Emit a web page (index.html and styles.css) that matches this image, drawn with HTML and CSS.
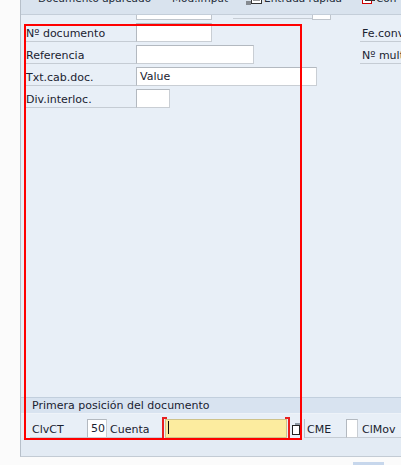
FILE: index.html
```html
<!DOCTYPE html>
<html>
<head>
<meta charset="utf-8">
<link rel="stylesheet" href="styles.css">
</head>
<body>
<div class="screen">
  <div class="gutter"></div>
  <div class="panel">
    <div class="toolbar">
      <span class="tb t1">Documento aparcado</span>
      <span class="tb t2">Mod.imput</span>
      <span class="tbicon i1"><svg width="17" height="14" viewBox="0 0 17 14"><rect x="5.5" y="0.5" width="10" height="12" fill="#fff" stroke="#333"/><path d="M7 3h7M7 6h7M7 9h7" stroke="#333"/><path d="M0 11h5M0 13h5" stroke="#333"/></svg></span>
      <span class="tb t3">Entrada rápida</span>
      <span class="tbicon i2"><svg width="14" height="14" viewBox="0 0 14 14"><rect x="0.5" y="3.5" width="9" height="9" fill="#fff" stroke="#c00"/><rect x="3.5" y="0.5" width="9" height="9" fill="none" stroke="#333"/></svg></span>
      <span class="tb t4">Con</span>
    </div>
    <div class="partial">
      <span class="pbox pb1"></span>
      <span class="pline"></span>
      <span class="pbox pb2"></span>
    </div>
    <div class="form">
      <div class="row">
        <span class="lbl">Nº documento</span>
        <span class="cell"><span class="inp w1"></span></span>
        <span class="rlbl">Fe.conversión</span>
      </div>
      <div class="row">
        <span class="lbl">Referencia</span>
        <span class="cell"><span class="inp w2"></span></span>
        <span class="rlbl">Nº multiplicador</span>
      </div>
      <div class="row">
        <span class="lbl">Txt.cab.doc.</span>
        <span class="cell"><span class="inp w3">Value</span></span>
      </div>
      <div class="row">
        <span class="lbl">Div.interloc.</span>
        <span class="cell"><span class="inp w4"></span></span>
      </div>
    </div>
    <div class="sechead">Primera posición del documento</div>
    <div class="itemrow">
      <span class="ilbl l1">ClvCT</span>
      <span class="inp small">50</span>
      <span class="ilbl l2">Cuenta</span>
      <span class="req"><span class="inp yellow"><span class="caret"></span></span></span>
      <span class="f4"><svg width="12" height="14" viewBox="0 0 12 14"><rect x="4" y="1" width="7" height="9" fill="#8c97a3"/><rect x="1.5" y="3.5" width="7" height="9" fill="#fff" stroke="#222"/></svg></span>
      <span class="ilbl l3">CME</span>
      <span class="inp chk"></span>
      <span class="ilbl l4">ClMov</span>
    </div>
    <div class="bottomband"></div>
  </div>
</div>
<div class="redframe"></div>
<div class="scrollnub"></div>
</body>
</html>
```
FILE: styles.css
```css
html, body {
  margin: 0;
  padding: 0;
}
body {
  width: 401px;
  height: 465px;
  overflow: hidden;
  background: #fbfbfb;
  font-family: "DejaVu Sans", Verdana, sans-serif;
  font-size: 11px;
  color: #1a2230;
  position: relative;
}
.screen {
  display: flex;
  width: 420px;
}
.gutter {
  width: 20px;
  flex: none;
}
.panel {
  width: 400px;
  flex: none;
  border-left: 1px solid #b7c0ca;
  border-bottom: 1px solid #c3cbd4;
  background: #e8eff7;
}
.toolbar {
  height: 14px;
  border-bottom: 1px solid #c4ced9;
  background: #d9e3ee;
  position: relative;
  overflow: hidden;
  display: flex;
  align-items: flex-end;
  font-size: 10.5px;
  color: #222b38;
}
.tb {
  display: block;
  flex: none;
  line-height: 14px;
  margin-bottom: 9px;
  white-space: nowrap;
  overflow: hidden;
}
.t1 { margin-left: 17px; width: 134px; }
.t2 { width: 74px; }
.tbicon {
  display: block;
  flex: none;
  margin-bottom: 9px;
  line-height: 0;
}
.i1 { width: 18px; }
.t3 { width: 98px; }
.i2 { width: 14px; }
.t4 { width: 30px; }

.partial {
  height: 5px;
  display: flex;
  align-items: flex-end;
  overflow: hidden;
  position: relative;
}
.pbox {
  display: block;
  height: 10px;
  background: #fff;
  border: 1px solid #bfc5cc;
  box-sizing: border-box;
  flex: none;
}
.pb1 { margin-left: 115px; width: 76px; }
.pline {
  display: block;
  width: 79px;
  height: 1px;
  margin-left: 21px;
  margin-bottom: 1px;
  background: #c5ccd4;
}
.pb2 { width: 19px; }

.form {
  height: 377px;
  padding-top: 3px;
  box-sizing: border-box;
  display: flex;
  flex-direction: column;
  gap: 3px;
}
.row {
  display: flex;
  height: 19px;
}
.lbl {
  width: 111px;
  flex: none;
  margin-left: 4px;
  padding-left: 1px;
  box-sizing: border-box;
  border-bottom: 1px solid #c5ccd4;
  line-height: 17px;
  padding-top: 2px;
  height: 19px;
  white-space: nowrap;
  overflow: hidden;
}
.cell {
  width: 224px;
  flex: none;
}
.inp {
  display: block;
  height: 19px;
  box-sizing: border-box;
  background: #fff;
  border: 1px solid #b3b9c0;
  border-right-color: #c9ced4;
  border-bottom-color: #c9ced4;
  line-height: 17px;
  padding-left: 3px;
  color: #1a2230;
  white-space: nowrap;
}
.w1 { width: 76px; }
.w2 { width: 118px; }
.w3 { width: 181px; }
.w4 { width: 34px; }
.rlbl {
  flex: 1;
  padding-left: 2px;
  border-bottom: 1px solid #c5ccd4;
  line-height: 17px;
  padding-top: 2px;
  height: 19px;
  box-sizing: border-box;
  white-space: nowrap;
  overflow: hidden;
}

.sechead {
  height: 17px;
  box-sizing: border-box;
  border-top: 1px solid #c2cfdd;
  border-bottom: 1px solid #eef3f9;
  background: #d8e3f0;
  padding-left: 11px;
  line-height: 15px;
  white-space: nowrap;
}
.itemrow {
  height: 24px;
  display: flex;
  align-items: flex-end;
  padding-left: 9px;
}
.ilbl {
  display: block;
  height: 19px;
  line-height: 17px;
  padding-top: 2px;
  box-sizing: border-box;
  border-bottom: 1px solid #c5ccd4;
  white-space: nowrap;
  flex: none;
}
.l1 { width: 57px; padding-left: 2px; }
.small { width: 20px; padding-left: 3px; flex: none; }
.l2 { width: 55px; padding-left: 3px; }
.req {
  display: block;
  position: relative;
  flex: none;
  width: 128px;
  height: 21px;
  box-sizing: border-box;
  border-left: 2px solid #e82020;
  border-right: 2px solid #e82020;
  padding-left: 1px;
  padding-top: 2px;
}
.req::before, .req::after {
  content: "";
  position: absolute;
  top: 0;
  width: 3px;
  height: 2px;
  background: #e82020;
}
.req::before { left: 0; }
.req::after { right: 0; }
.yellow {
  width: 122px;
  background: #fcec9f;
  border-color: #cfc38a;
  position: relative;
}
.caret {
  position: absolute;
  left: 2px;
  top: 1px;
  width: 1px;
  height: 13px;
  background: #111;
}
.f4 {
  display: block;
  flex: none;
  width: 15px;
  height: 19px;
  line-height: 0;
  padding-top: 3px;
  padding-left: 1px;
  box-sizing: border-box;
  border-right: 1px solid #b9c1ca;
}
.l3 { width: 41px; padding-left: 2px; }
.chk { width: 12px; flex: none; padding: 0; }
.l4 { flex: 1; padding-left: 4px; }
.bottomband {
  height: 18px;
  background: #e3ebf4;
}

.redframe {
  position: absolute;
  left: 24px;
  top: 24px;
  width: 278px;
  height: 416px;
  box-sizing: border-box;
  border: 2px solid #ff0000;
  pointer-events: none;
}
.scrollnub {
  position: absolute;
  left: 353px;
  top: 462px;
  width: 31px;
  height: 3px;
  background: #c7d7ec;
}
```
